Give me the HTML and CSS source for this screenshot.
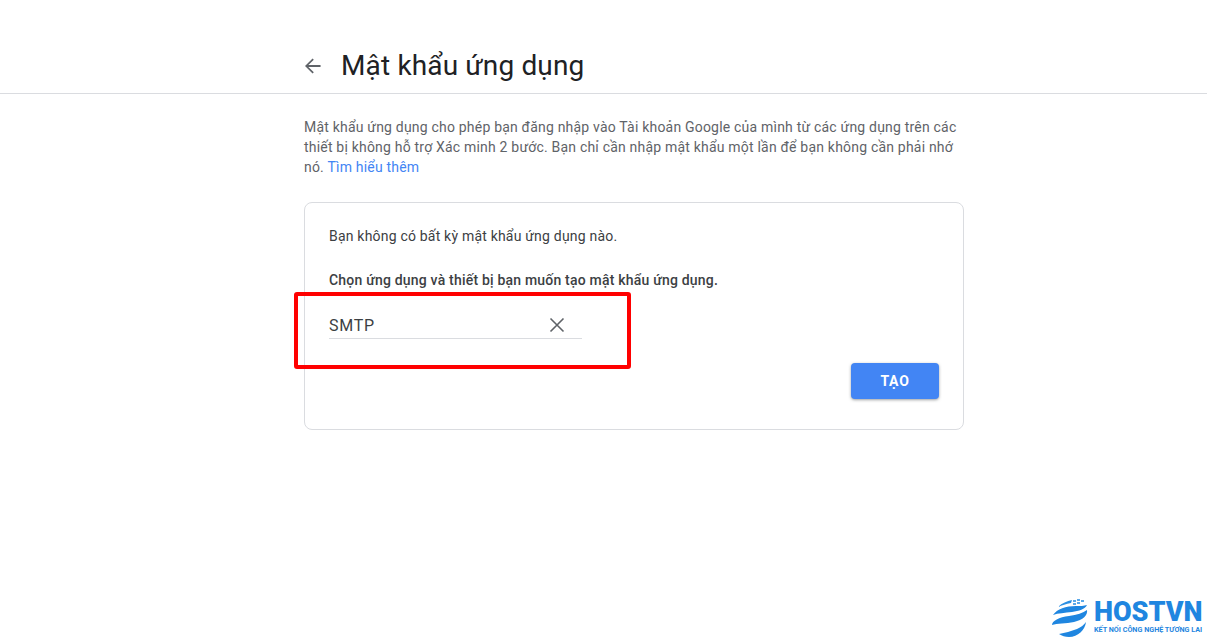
FILE: index.html
```html
<!DOCTYPE html>
<html lang="vi">
<head>
    <meta charset="UTF-8">
    <meta name="viewport" content="width=device-width, initial-scale=1.0">
    <title>Mật khẩu ứng dụng</title>
    <link rel="stylesheet" href="styles.css">
</head>
<body>
    <header class="topbar">
        <svg class="back" width="16" height="16" viewBox="0 0 18 18">
            <path d="M17.5 8H3.8l6.1-6.1L8.5.7 0 9l8.5 8.3 1.4-1.2L3.8 10h13.7z" fill="#5f6368"/>
        </svg>
        <h1>Mật khẩu ứng dụng</h1>
    </header>
    <main class="wrapper">
        <p class="intro">Mật khẩu ứng dụng cho phép bạn đăng nhập vào Tài khoản Google của mình từ các ứng dụng trên các thiết bị không hỗ trợ Xác minh 2 bước. Bạn chỉ cần nhập mật khẩu một lần để bạn không cần phải nhớ nó. <a href="#">Tìm hiểu thêm</a></p>
        <section class="card">
            <p class="none">Bạn không có bất kỳ mật khẩu ứng dụng nào.</p>
            <p class="choose">Chọn ứng dụng và thiết bị bạn muốn tạo mật khẩu ứng dụng.</p>
            <div class="field">
                <span class="field-value">SMTP</span>
                <svg width="16" height="16" viewBox="0 0 16 16">
                    <path d="M1.5 1.5l13 13M14.5 1.5l-13 13" stroke="#5f6368" stroke-width="1.6" fill="none"/>
                </svg>
            </div>
            <div class="actions">
                <button>TẠO</button>
            </div>
        </section>
    </main>
    <!-- red annotation on top of the screenshot -->
    <div class="highlight"></div>
    <div class="logo">
        <svg width="36" height="40" viewBox="0 0 36 40">
            <path d="M6 9C10 5 15 3 20 2l-1 3c-5 1-9 2-13 4z" fill="#2b8fe3"/>
            <path d="M21 2h3v2h-3zM25 1h3v2h-3zM29 2h3v2h-3zM21 5h3v2h-3zM25 4h3v2h-3z" fill="#5aa9ea"/>
            <path d="M1 17C5 11 14 8 24 8c4 0 8 0 11-1-2 4-8 6-15 7-7 1-14 1-19 3z" fill="#1f86e0"/>
            <path d="M0 27c0-4 7-8 17-9 8-1 14-3 18-6 1 5-4 10-13 12-8 2-17 1-22 3z" fill="#1f86e0"/>
            <path d="M7 36c6-1 12-3 18-5 4-2 7-4 9-7-1 8-8 15-17 15-4 0-7-1-10-3z" fill="#1f86e0"/>
        </svg>
        <div class="logo-text">
            <span class="logo-name">HOSTVN</span>
            <span class="logo-tag">KẾT NỐI CÔNG NGHỆ TƯƠNG LAI</span>
        </div>
    </div>
</body>
</html>
```

FILE: styles.css
```css
html, body{
    height: 100%;
}
body{
    margin: 0;
    background: #fff;
    font-family: Roboto, "Liberation Sans", sans-serif;
    color: #3c4043;
    letter-spacing: .2px;
    overflow: hidden;
}
p{
    margin: 0;
}
.topbar{
    height: 93px;
    box-sizing: content-box;
    border-bottom: 1px solid #dadce0;
    padding-left: 305px;
    display: flex;
    align-items: center;
    gap: 20px;
}
.back{
    flex: none;
    margin-top: 39px;
}
h1{
    margin: 39px 0 0 0;
    font-weight: 400;
    font-size: 28px;
    line-height: 44px;
    letter-spacing: .15px;
    color: #202124;
}
.wrapper{
    width: 660px;
    margin-left: 304px;
    padding-top: 23px;
}
.intro{
    font-size: 14px;
    line-height: 20px;
    color: #5f6368;
}
.intro a{
    color: #4285f4;
    text-decoration: none;
}
.card{
    margin-top: 25px;
    height: 228px;
    box-sizing: border-box;
    border: 1px solid #dadce0;
    border-radius: 8px;
    padding: 23px 24px;
    font-size: 14px;
    line-height: 20px;
}
.choose{
    margin-top: 24px;
    font-weight: 500;
}
.field{
    width: 253px;
    height: 31px;
    margin-top: 18px;
    border-bottom: 1px solid #dadce0;
    display: flex;
    justify-content: space-between;
    align-items: center;
    font-size: 16px;
    letter-spacing: .7px;
    color: #3c4043;
    padding-right: 17px;
    padding-top: 3px;
    box-sizing: border-box;
}
.field-value{
    margin-top: 2px;
}
.actions{
    display: flex;
    justify-content: flex-end;
    margin-top: 24px;
}
button{
    width: 88px;
    height: 36px;
    border: 0;
    border-radius: 4px;
    background: #4285f4;
    color: #fff;
    font-family: inherit;
    font-size: 14px;
    font-weight: 700;
    letter-spacing: .75px;
    box-shadow: 0 1px 3px rgba(60,64,67,.5);
}
.highlight{
    position: absolute;
    left: 294px;
    top: 292px;
    width: 329px;
    height: 69px;
    border: 4px solid #f00;
    border-radius: 3px;
}
.logo{
    position: absolute;
    left: 1052px;
    top: 598px;
    display: flex;
    gap: 6px;
    letter-spacing: 0;
}
.logo-text{
    display: flex;
    flex-direction: column;
    color: #1f86e0;
}
.logo-name{
    font-family: Roboto, sans-serif;
    font-weight: 900;
    font-size: 27px;
    line-height: 28px;
    white-space: nowrap;
}
.logo-tag{
    font-family: Roboto, sans-serif;
    font-weight: 700;
    font-size: 8px;
    line-height: 8px;
    white-space: nowrap;
    transform: scaleX(.9);
    transform-origin: left;
}
```
